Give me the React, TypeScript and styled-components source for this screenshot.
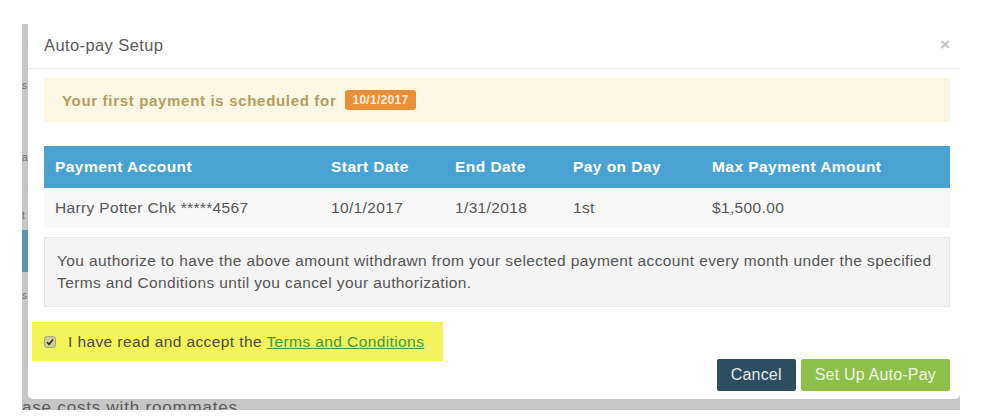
import React from "react";
import styled, { createGlobalStyle } from "styled-components";

const Global = createGlobalStyle`
  html, body { margin: 0; padding: 0; background: #fff; }
  body { font-family: "Liberation Sans", Arial, sans-serif; }
`;

const Page = styled.div`
  width: 982px;
  height: 420px;
  background: #fff;
  overflow: hidden;
  padding: 24px 0 0 22px;
  box-sizing: border-box;
`;

const Backdrop = styled.div`
  width: 938px;
  height: 386px;
  background: #c6c6c6;
  display: grid;
  grid-template-columns: 6px 1fr;
  grid-template-rows: 375px 11px;
  overflow: hidden;
`;

const SideStrip = styled.div`
  display: flex;
  flex-direction: column;
  align-items: flex-start;
  overflow: hidden;
  font-size: 10px;
  color: #6a6a6a;
  padding-top: 56px;
`;

const StripGlyph = styled.span<{ $h: number }>`
  height: ${(p) => p.$h}px;
  line-height: 12px;
  display: block;
`;

const StripBar = styled.div`
  width: 6px;
  height: 42px;
  background: #5f94b1;
  margin-bottom: 18px;
`;

const BottomStrip = styled.div`
  grid-column: 1 / 3;
  font-size: 17px;
  letter-spacing: 0.8px;
  color: #5a5a5a;
  line-height: 22px;
  margin-top: -2px;
  white-space: nowrap;
  overflow: hidden;
`;

const Dialog = styled.div`
  background: #fff;
  border-radius: 0 0 5px 5px;
  display: flex;
  flex-direction: column;
  color: #555;
`;

const Header = styled.div`
  height: 44px;
  display: flex;
  align-items: center;
  justify-content: space-between;
  padding: 0 10px 0 16px;
  border-bottom: 1px solid #ececec;
`;

const Title = styled.div`
  font-size: 16.5px;
  letter-spacing: 0.4px;
  color: #5a5a5a;
  margin-top: -2px;
`;

const Close = styled.div`
  font-size: 17px;
  font-weight: bold;
  color: #c4c4c4;
  margin-top: -2px;
`;

const Body = styled.div`
  padding: 9px 10px 0 16px;
  display: flex;
  flex-direction: column;
`;

const Alert = styled.div`
  height: 44px;
  background: #fbf7e4;
  display: flex;
  align-items: center;
  padding-left: 18px;
  gap: 9px;
  font-size: 15px;
  letter-spacing: 0.68px;
  font-weight: bold;
  color: #b49c62;
`;

const Badge = styled.span`
  background: #e98f37;
  color: #fbeede;
  font-size: 12px;
  letter-spacing: 0.3px;
  font-weight: bold;
  padding: 3px 7px;
  border-radius: 3px;
`;

const Table = styled.div`
  margin-top: 24px;
  display: grid;
  grid-template-columns: 276px 124px 118px 139px 1fr;
`;

const HeadCell = styled.div`
  background: #4aa2d3;
  color: #fff;
  font-weight: bold;
  font-size: 15.5px;
  letter-spacing: 0.45px;
  height: 42px;
  display: flex;
  align-items: center;
  padding-left: 11px;
`;

const Cell = styled.div`
  background: #f8f8f8;
  color: #555;
  font-size: 15.5px;
  letter-spacing: 0.35px;
  height: 40px;
  display: flex;
  align-items: center;
  padding-left: 11px;
`;

const Well = styled.div`
  margin-top: 9px;
  background: #f4f4f4;
  border: 1px solid #e6e6e6;
  padding: 12px 10px 12px 12px;
  font-size: 15.5px;
  letter-spacing: 0.38px;
  line-height: 22px;
  color: #555;
`;

const Footer = styled.div`
  display: flex;
  flex-direction: column;
  padding: 15px 10px 0 4px;
`;

const Highlight = styled.label`
  width: 411px;
  height: 39px;
  background: #f3f35c;
  display: flex;
  align-items: center;
  padding-left: 12px;
  box-sizing: border-box;
  font-size: 15.5px;
  letter-spacing: 0.4px;
  color: #4c4c3a;
  gap: 12px;
`;

const Check = styled.span`
  width: 12px;
  height: 12px;
  border-radius: 3px;
  background: #cfcf9a;
  border: 1px solid #a6a67a;
  display: flex;
  align-items: center;
  justify-content: center;
  box-sizing: border-box;
`;

const TermsLink = styled.a`
  color: #3d9a3d;
  text-decoration: underline;
`;

const Actions = styled.div`
  display: flex;
  justify-content: flex-end;
  gap: 5px;
  margin-top: -2px;
`;

const Button = styled.button<{ $variant: "dark" | "green" }>`
  height: 32px;
  border: none;
  border-radius: 2px;
  font-family: "Liberation Sans", Arial, sans-serif;
  font-size: 16px;
  letter-spacing: 0.2px;
  padding: 0 14px;
  background: ${(p) => (p.$variant === "dark" ? "#2d4e60" : "#8fbf4b")};
  color: ${(p) => (p.$variant === "dark" ? "#e4e8ea" : "#eef6e2")};
`;

const columns = ["Payment Account", "Start Date", "End Date", "Pay on Day", "Max Payment Amount"];
const row = ["Harry Potter Chk *****4567", "10/1/2017", "1/31/2018", "1st", "$1,500.00"];

export default function App() {
  return (
    <>
      <Global />
      <Page>
        <Backdrop>
          <SideStrip>
            <StripGlyph $h={72}>s</StripGlyph>
            <StripGlyph $h={58}>a</StripGlyph>
            <StripGlyph $h={20}>t</StripGlyph>
            <StripBar />
            <StripGlyph $h={20}>s</StripGlyph>
          </SideStrip>
          <Dialog>
            <Header>
              <Title>Auto-pay Setup</Title>
              <Close>×</Close>
            </Header>
            <Body>
              <Alert>
                Your first payment is scheduled for <Badge>10/1/2017</Badge>
              </Alert>
              <Table>
                {columns.map((c) => (
                  <HeadCell key={c}>{c}</HeadCell>
                ))}
                {row.map((c) => (
                  <Cell key={c}>{c}</Cell>
                ))}
              </Table>
              <Well>
                You authorize to have the above amount withdrawn from your selected payment account every month under the specified
                Terms and Conditions until you cancel your authorization.
              </Well>
            </Body>
            <Footer>
              <Highlight>
                <Check>
                  <svg width="8" height="8" viewBox="0 0 8 8">
                    <path d="M1 4.2 L3 6.2 L7 1.5" stroke="#2a2a1a" strokeWidth="1.6" fill="none" />
                  </svg>
                </Check>
                <span>
                  I have read and accept the <TermsLink>Terms and Conditions</TermsLink>
                </span>
              </Highlight>
              <Actions>
                <Button $variant="dark">Cancel</Button>
                <Button $variant="green">Set Up Auto-Pay</Button>
              </Actions>
            </Footer>
          </Dialog>
          <BottomStrip>ase costs with roommates</BottomStrip>
        </Backdrop>
      </Page>
    </>
  );
}
